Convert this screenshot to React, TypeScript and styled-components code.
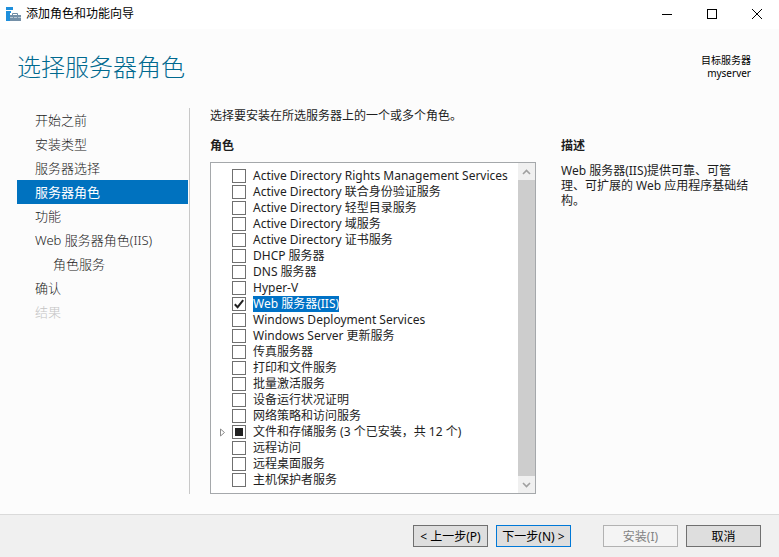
import React, { useState } from "react";
import styled, { createGlobalStyle } from "styled-components";

const GlobalStyle = createGlobalStyle`
  *, *::before, *::after { box-sizing: border-box; }
  body {
    margin: 0;
    background: #fcfcfc;
    color: #1e1e1e;
    font-family: "Noto Sans", "Noto Sans CJK SC", sans-serif;
    font-size: 12px;
    line-height: 16px;
  }
  button, input { font: inherit; margin: 0; }
`;

const Window = styled.div`
  display: flex;
  flex-direction: column;
  min-height: 100vh;
`;

const TitleBar = styled.header`
  display: flex;
  align-items: center;
  height: 29px;
  padding: 0 0 2px 5px;
  background: #fff;
  color: #000;
`;

const AppIcon = styled.svg`
  width: 16px;
  height: 16px;
  margin-right: 5px;
`;

const Caption = styled.span`
  flex: 1;
`;

const CaptionButton = styled.button`
  display: grid;
  place-items: center;
  width: 45px;
  height: 27px;
  padding: 0;
  border: 0;
  background: transparent;
  color: #000;
`;

const Heading = styled.div`
  display: flex;
  justify-content: space-between;
  align-items: center;
  height: 79px;
  padding: 0 28px 3px 17px;
`;

const Title = styled.h1`
  margin: 0;
  font-size: 24px;
  line-height: 32px;
  font-weight: 300;
  color: #00698f;
`;

const Target = styled.div`
  color: #000;
  font-size: 10px;
  line-height: 13px;
  text-align: right;
`;

const Content = styled.div`
  display: flex;
  flex: 1;
  padding: 0 26px 20px 17px;
`;

const Steps = styled.nav`
  flex: none;
  width: 173px;
  padding-right: 1px;
  border-right: 1px solid #c8c8c8;
`;

const Step = styled.a<{ $state?: "current" | "disabled"; $nested?: boolean }>`
  display: block;
  height: 24px;
  padding-left: ${(p) => (p.$nested ? 36 : 18)}px;
  font-size: 13px;
  line-height: 24px;
  text-decoration: none;
  font-weight: ${(p) => (p.$state === "current" ? 400 : 300)};
  background: ${(p) => (p.$state === "current" ? "#0072bf" : "transparent")};
  color: ${(p) => (p.$state === "current" ? "#fff" : p.$state === "disabled" ? "#c4c4c4" : "#222")};
`;

const Main = styled.main`
  display: flex;
  flex-direction: column;
  flex: 1;
  min-width: 0;
  margin-left: 20px;
`;

const Intro = styled.p`
  margin: 0 0 14px;
`;

const Columns = styled.div`
  display: flex;
  flex: 1;
  gap: 25px;
`;

const RolesColumn = styled.section`
  display: flex;
  flex-direction: column;
  flex: 1;
  min-width: 0;
`;

const DescriptionColumn = styled.section`
  flex: none;
  width: 192px;
`;

const SectionTitle = styled.h2`
  margin: 0;
  font-size: 12px;
  line-height: 16px;
  font-weight: 700;
`;

const Description = styled.p`
  margin: 9px 0 0;
  line-height: 15px;
`;

const ListFrame = styled.div`
  display: flex;
  flex: 1;
  margin-top: 8px;
  border: 1px solid #a5a8ab;
  background: #fff;
`;

const RoleList = styled.ul`
  flex: 1;
  min-width: 0;
  margin: 0;
  padding: 5px 0;
  list-style: none;
`;

const RoleRow = styled.li`
  display: flex;
  align-items: center;
  height: 16px;
  white-space: nowrap;
`;

const ExpanderSlot = styled.span`
  display: flex;
  flex: none;
  width: 21px;
  padding-left: 8px;
`;

const Expander = styled.button`
  display: flex;
  padding: 0;
  border: 0;
  background: transparent;
`;

const RoleLabel = styled.label`
  display: flex;
  align-items: center;
  gap: 7px;
`;

const TickFrame = styled.span`
  display: grid;
  flex: none;
  > * { grid-area: 1 / 1; place-self: center; }
  > svg { pointer-events: none; }
`;

const TickBox = styled.input`
  appearance: none;
  width: 14px;
  height: 14px;
  border: 1px solid #707070;
  background: #fff;
`;

const RoleName = styled.span<{ $selected: boolean }>`
  height: 16px;
  line-height: 16px;
  background: ${(p) => (p.$selected ? "#0072c6" : "transparent")};
  color: ${(p) => (p.$selected ? "#fff" : "inherit")};
`;

const ScrollBar = styled.div`
  display: flex;
  flex-direction: column;
  flex: none;
  width: 17px;
`;

const ScrollButton = styled.button`
  display: grid;
  place-items: center;
  height: 17px;
  padding: 0;
  border: 0;
  background: #f0f0f0;
`;

const ScrollThumb = styled.div`
  flex: 1;
  background: #cdcdcd;
`;

const Footer = styled.footer`
  display: flex;
  justify-content: flex-end;
  gap: 8px;
  padding: 10px 18px;
  border-top: 1px solid #dadada;
  background: #f0f0f0;
`;

const ActionButton = styled.button<{ $primary?: boolean; $apart?: boolean }>`
  width: 75px;
  height: 22px;
  margin-left: ${(p) => (p.$apart ? 24 : 0)}px;
  padding: 2px 0 0;
  border: 1px solid ${(p) => (p.$primary ? "#0078d7" : "#707070")};
  background: #dedede;
  color: #000;
  line-height: 18px;
  white-space: nowrap;
  &:disabled {
    border-color: #b2b2b2;
    background: #f4f4f4;
    color: #838383;
  }
`;

type StepItem = { label: string; state?: "current" | "disabled"; nested?: boolean };

const steps: StepItem[] = [
  { label: "开始之前" },
  { label: "安装类型" },
  { label: "服务器选择" },
  { label: "服务器角色", state: "current" },
  { label: "功能" },
  { label: "Web 服务器角色(IIS)" },
  { label: "角色服务", nested: true },
  { label: "确认" },
  { label: "结果", state: "disabled" },
];

const webServer = "Web 服务器(IIS)";
const storage = "文件和存储服务 (3 个已安装，共 12 个)";

const roles = [
  "Active Directory Rights Management Services",
  "Active Directory 联合身份验证服务",
  "Active Directory 轻型目录服务",
  "Active Directory 域服务",
  "Active Directory 证书服务",
  "DHCP 服务器",
  "DNS 服务器",
  "Hyper-V",
  webServer,
  "Windows Deployment Services",
  "Windows Server 更新服务",
  "传真服务器",
  "打印和文件服务",
  "批量激活服务",
  "设备运行状况证明",
  "网络策略和访问服务",
  storage,
  "远程访问",
  "远程桌面服务",
  "主机保护者服务",
];

function Role({ name }: { name: string }) {
  const [checked, setChecked] = useState(name === webServer);
  const partial = name === storage;
  return (
    <RoleRow>
      <ExpanderSlot>
        {partial && (
          <Expander aria-label="展开">
            <svg width="7" height="9" viewBox="0 0 7 9">
              <path d="M1.5 1 L5.5 4.5 L1.5 8 Z" fill="#fff" stroke="#8c8c8c" />
            </svg>
          </Expander>
        )}
      </ExpanderSlot>
      <RoleLabel>
        <TickFrame>
          <TickBox type="checkbox" checked={checked} onChange={(e) => setChecked(e.target.checked)} />
          {partial && (
            <svg width="8" height="8" viewBox="0 0 8 8">
              <rect width="8" height="8" fill="#212121" />
            </svg>
          )}
          {checked && (
            <svg width="12" height="12" viewBox="0 0 12 12">
              <path d="M1.8 6.2 L4.6 9.2 L10.2 2.2" fill="none" stroke="#212121" strokeWidth="2" />
            </svg>
          )}
        </TickFrame>
        <RoleName $selected={name === webServer}>{name}</RoleName>
      </RoleLabel>
    </RoleRow>
  );
}

export default function App() {
  return (
    <>
      <GlobalStyle />
      <Window>
        <TitleBar>
          <AppIcon viewBox="0 0 16 16" aria-hidden="true">
            <path d="M1 1h7v3H1zM1 5h5v10H1z" fill="#1e8fdc" />
            <path d="M4 7h12v9H4z" fill="#fff" />
            <path d="M1 5h4v10H1z" fill="#1e8fdc" />
            <path d="M7.5 9V7.5h5V9" fill="none" stroke="#6f8ba4" />
            <path d="M5 9h11v6H5z" fill="#7590a8" />
            <path d="M5 11.5h3m1 0h3m1 0h3" stroke="#b9c8d5" />
          </AppIcon>
          <Caption>添加角色和功能向导</Caption>
          <CaptionButton aria-label="最小化">
            <svg width="10" height="10" viewBox="0 0 10 10">
              <path d="M0 5.5h10" stroke="#000" />
            </svg>
          </CaptionButton>
          <CaptionButton aria-label="最大化">
            <svg width="10" height="10" viewBox="0 0 10 10">
              <rect x=".5" y=".5" width="9" height="9" fill="none" stroke="#000" />
            </svg>
          </CaptionButton>
          <CaptionButton aria-label="关闭">
            <svg width="10" height="10" viewBox="0 0 10 10">
              <path d="M0 0L10 10M10 0L0 10" stroke="#000" />
            </svg>
          </CaptionButton>
        </TitleBar>
        <Heading>
          <Title>选择服务器角色</Title>
          <Target>
            <div>目标服务器</div>
            <div>myserver</div>
          </Target>
        </Heading>
        <Content>
          <Steps>
            {steps.map((s) => (
              <Step
                key={s.label}
                href="#"
                $state={s.state}
                $nested={s.nested}
                aria-current={s.state === "current" ? "step" : undefined}
                aria-disabled={s.state === "disabled" ? true : undefined}
              >
                {s.label}
              </Step>
            ))}
          </Steps>
          <Main>
            <Intro>选择要安装在所选服务器上的一个或多个角色。</Intro>
            <Columns>
              <RolesColumn>
                <SectionTitle>角色</SectionTitle>
                <ListFrame>
                  <RoleList>
                    {roles.map((name) => (
                      <Role key={name} name={name} />
                    ))}
                  </RoleList>
                  <ScrollBar>
                    <ScrollButton aria-label="向上滚动">
                      <svg width="9" height="6" viewBox="0 0 9 6">
                        <path d="M1 5L4.5 1.5L8 5" fill="none" stroke="#a0a0a0" strokeWidth="1.6" />
                      </svg>
                    </ScrollButton>
                    <ScrollThumb />
                    <ScrollButton aria-label="向下滚动">
                      <svg width="9" height="6" viewBox="0 0 9 6">
                        <path d="M1 1L4.5 4.5L8 1" fill="none" stroke="#a0a0a0" strokeWidth="1.6" />
                      </svg>
                    </ScrollButton>
                  </ScrollBar>
                </ListFrame>
              </RolesColumn>
              <DescriptionColumn>
                <SectionTitle>描述</SectionTitle>
                <Description>Web 服务器(IIS)提供可靠、可管理、可扩展的 Web 应用程序基础结构。</Description>
              </DescriptionColumn>
            </Columns>
          </Main>
        </Content>
        <Footer>
          <ActionButton>&lt; 上一步(P)</ActionButton>
          <ActionButton $primary>下一步(N) &gt;</ActionButton>
          <ActionButton $apart disabled>安装(I)</ActionButton>
          <ActionButton>取消</ActionButton>
        </Footer>
      </Window>
    </>
  );
}
